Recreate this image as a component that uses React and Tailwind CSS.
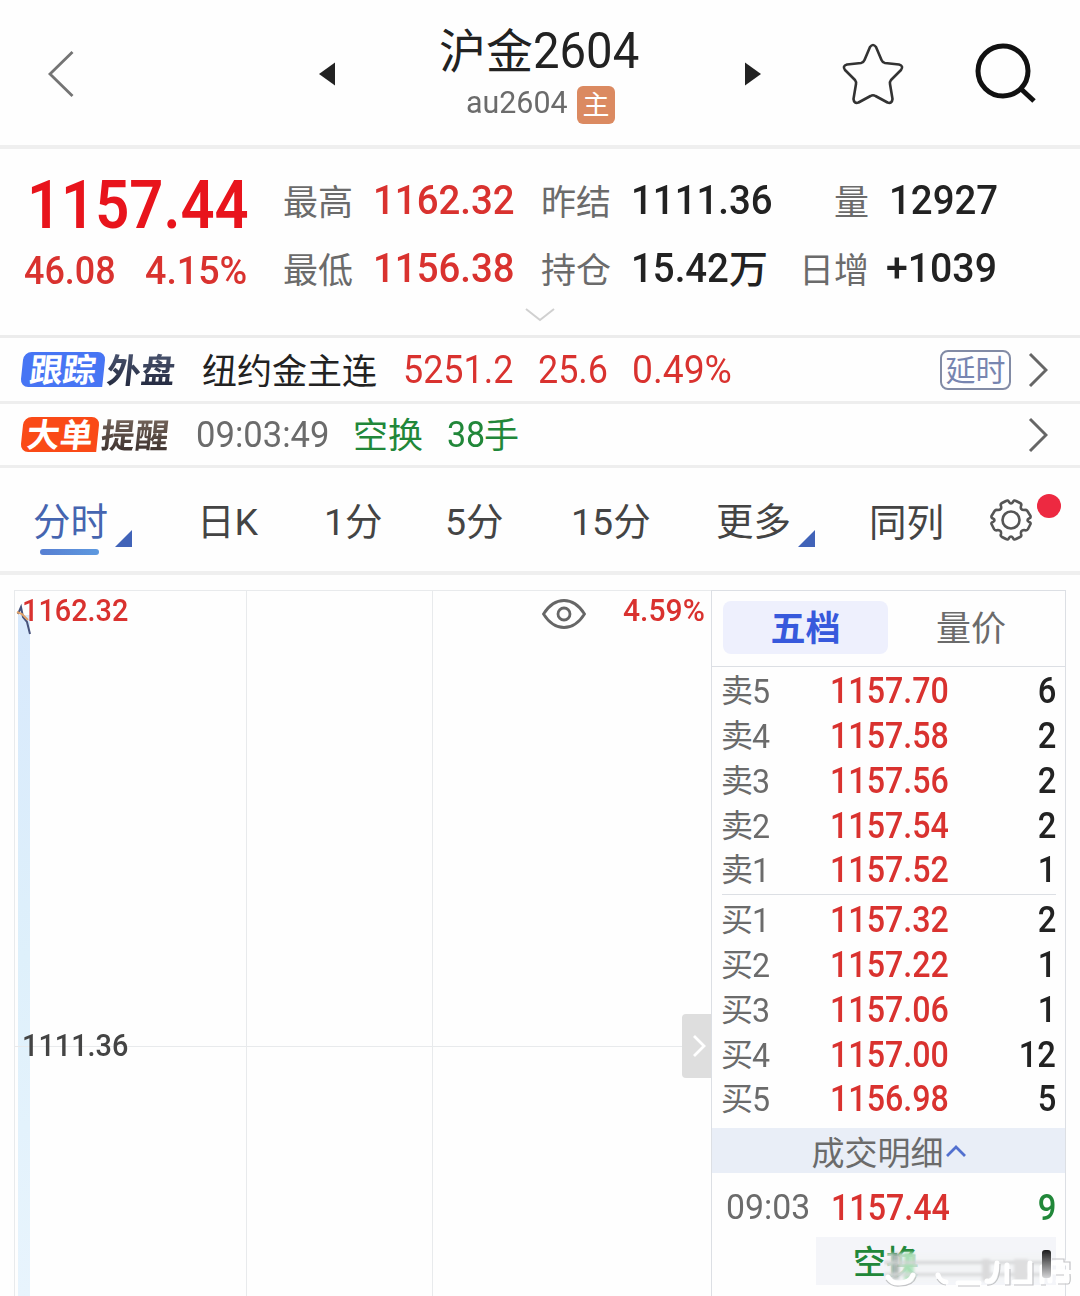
const asks = [["卖5", "1157.70", "6"], ["卖4", "1157.58", "2"], ["卖3", "1157.56", "2"], ["卖2", "1157.54", "2"], ["卖1", "1157.52", "1"]];
const bids = [["买1", "1157.32", "2"], ["买2", "1157.22", "1"], ["买3", "1157.06", "1"], ["买4", "1157.00", "12"], ["买5", "1156.98", "5"]];

function Num({ className = "", scale = "scale-x-[0.945]", children }) {
  return <span className={"block whitespace-nowrap origin-left " + scale + " " + className}>{children}</span>;
}

function Chevron() {
  return (
    <svg className="w-5 h-9 shrink-0" viewBox="0 0 20 36" fill="none" stroke="#666" strokeWidth="3">
      <path d="M2 2 18 18 2 34" />
    </svg>
  );
}

function Header() {
  return (
    <header className="h-[149px] border-b-4 border-[#efefef] flex">
      <svg className="w-7 h-12 ml-[47px] mt-[50px]" viewBox="0 0 28 48" fill="none" stroke="#747474" strokeWidth="2.8">
        <path d="M25.500 2 3 24 25.500 46" />
      </svg>
      <svg className="w-4 h-6 ml-[244px] mt-[62px]" viewBox="0 0 16 24" fill="#222"><path d="M0 12 16 0.500V23.500Z" /></svg>
      <div className="w-[410px] flex flex-col items-center">
        <div className="flex w-[202px] mt-[23px] h-14 leading-[56px] text-[#222]">
          <span className="text-[47px] w-[94px] whitespace-nowrap translate-y-px">沪金</span>
          <Num className="text-[50px]">2604</Num>
        </div>
        <div className="flex w-[150px] mt-[7px] items-center h-[38px] text-[#6b6b6b]">
          <Num className="text-[31px] leading-[32px] w-[111px] -mt-1 ml-px" scale="scale-x-[0.98]">au2604</Num>
          <span className="w-[38px] h-[38px] shrink-0 rounded-md bg-[#db8a61] text-white text-[27px] leading-[40px] text-center">主</span>
        </div>
      </div>
      <svg className="w-4 h-6 mt-[62px]" viewBox="0 0 16 24" fill="#222"><path d="M0 0.500V23.500L16 12Z" /></svg>
      <svg className="w-16 h-16 ml-[80px] mt-[42px]" viewBox="0 0 64 64" fill="none" stroke="#333" strokeWidth="2.600" strokeLinejoin="round">
        <path d="M29 5Q32 1 35 5L40.500 18Q41.500 20.500 44 21L58 22.500Q63 24 60 28L50 38Q48.500 40 49 42L51.500 57Q51 62 46.500 60.500L34.500 54Q32 52.500 29.500 54L17.500 60.500Q13 62 12.500 57L15 42Q15.500 40 14 38L4 28Q1 24 6 22.500L20 21Q22.500 20.500 23.500 18Z" />
      </svg>
      <svg className="w-16 h-16 ml-[69px] mt-[42px]" viewBox="0 0 64 64" fill="none" stroke="#111" strokeWidth="5">
        <circle cx="29" cy="29" r="25" /><path d="M46 46 60 59" />
      </svg>
    </header>
  );
}

function Stat({ label, value, labelClass, valueClass }) {
  return (
    <>
      <span className={"text-[35px] text-[#6b6b6b] whitespace-nowrap translate-y-1 " + labelClass}>{label}</span>
      <div className={"text-[41.500px] font-medium " + valueClass}>{value}</div>
    </>
  );
}

function Quote() {
  const s = "scale-x-[0.925]";
  return (
    <section className="h-[189px] border-b-[3px] border-[#ececec]">
      <div className="flex">
        <div className="w-[283px] pl-6 text-[#e8141c]">
          <div className="h-[112px] pt-[25px] pl-[3px]"><Num className="text-[66px] font-semibold leading-[64px]" scale="scale-x-[0.905]">1157.44</Num></div>
          <div className="flex -mt-[12px] h-11 leading-[44px] text-[38px] font-medium text-[#d9322f]">
            <Num className="w-[121px]">46.08</Num><Num className="w-[121px]" scale="scale-x-[0.99]">4.15%</Num>
          </div>
        </div>
        <div className="w-[797px] pt-[29px]">
          <div className="flex h-11 leading-[44px]">
            <Stat label="最高" value={<Num scale={s}>1162.32</Num>} labelClass="w-[90px]" valueClass="w-[168px] text-[#d9322f]" />
            <Stat label="昨结" value={<Num scale={s}>1111.36</Num>} labelClass="w-[90px]" valueClass="w-[168px] text-[#222]" />
            <Stat label="量" value={<Num scale={s}>12927</Num>} labelClass="w-[90px] pl-[35px]" valueClass="w-[139px] text-[#222]" />
          </div>
          <div className="flex mt-6 h-11 leading-[44px]">
            <Stat label="最低" value={<Num scale={s}>1156.38</Num>} labelClass="w-[90px]" valueClass="w-[168px] text-[#d9322f]" />
            <Stat label="持仓" value={<div className="flex whitespace-nowrap"><Num className="w-[98px]" scale={s}>15.42</Num><span className="text-[39px] translate-y-0.5">万</span></div>} labelClass="w-[90px]" valueClass="w-[168px] text-[#222]" />
            <Stat label="日增" value={<Num>+1039</Num>} labelClass="w-[87px]" valueClass="w-[140px] text-[#222]" />
          </div>
        </div>
      </div>
      <svg className="w-8 h-4 mx-auto mt-[14px]" viewBox="0 0 32 16" fill="none" stroke="#d0d0d0" strokeWidth="2"><path d="M2 2 16 13 30 2" /></svg>
    </section>
  );
}

function Tag({ first, second, box, text }) {
  return (
    <div className="flex items-center w-[160px] h-9 shrink-0 whitespace-nowrap text-[34px] font-bold leading-9">
      <span className={"h-[35px] rounded-l-lg rounded-tr-lg -skew-x-6 text-center text-white text-[33px] leading-[38px] " + box}>{first}</span>
      <span className={"ml-[3px] -skew-x-6 translate-y-px leading-[38px] bg-clip-text text-transparent bg-linear-to-b " + text}>{second}</span>
    </div>
  );
}

function Feeds() {
  return (
    <section>
      <div className="flex items-center h-[66px] border-b-[3px] border-[#eee] pl-[22px] leading-[44px] text-[#d9322f] text-[38px]">
        <Tag first="跟踪" second="外盘" box="w-[82px] bg-[#4775f4]" text="from-[#4b5570] to-[#20263b]" />
        <span className="text-[35px] text-[#222] w-[201px] ml-[20px] shrink-0 translate-y-[3px]">纽约金主连</span>
        <Num className="w-[135px] shrink-0">5251.2</Num>
        <Num className="w-[94px] shrink-0">25.6</Num>
        <Num scale="scale-x-[0.98]">0.49%</Num>
        <span className="ml-auto w-[71px] h-10 shrink-0 rounded-lg border-2 border-[#828ba5] text-[#7785b0] text-[30px] leading-[38px] text-center">延时</span>
        <div className="w-[69px] pl-[17px] shrink-0"><Chevron /></div>
      </div>
      <div className="flex items-center h-[64px] border-b-[3px] border-[#eee] pl-[22px] leading-[44px] text-[#218739]">
        <Tag first="大单" second="提醒" box="w-[76px] bg-[#fa4a17]" text="from-[#77675d] to-[#392e2b]" />
        <Num className="text-[37px] text-[#6b6b6b] w-[157px] ml-[14px]" scale="scale-x-[0.935]">09:03:49</Num>
        <span className="text-[35px] w-[94px] translate-y-0.5">空换</span>
        <Num className="text-[36px] w-[37px]">38</Num>
        <span className="text-[35px] translate-y-0.5">手</span>
        <div className="w-[69px] ml-auto pl-[17px] shrink-0"><Chevron /></div>
      </div>
    </section>
  );
}

function Corner() {
  return <svg className="w-[17px] h-[17px] mt-[30px] ml-[7px]" viewBox="0 0 17 17" fill="#4163b8"><path d="M17 0V17H0Z" /></svg>;
}

function Tabs() {
  return (
    <nav className="flex h-[107px] border-b-4 border-[#efefef] pt-8 pl-[33px] text-[37.500px] leading-[44px] text-[#444] whitespace-nowrap">
      <div className="w-[165px] flex text-[#4565b0]">
        <div className="w-[75px]">分时<div className="w-[59px] h-1.5 ml-[7px] mt-[5px] rounded-full bg-linear-to-r from-[#587fd2] to-[#5d99df]" /></div>
        <Corner />
      </div>
      <span className="w-[126px] -ml-px mr-px">日K</span>
      <span className="w-[121px]">1分</span>
      <span className="w-[126px]">5分</span>
      <span className="w-[145px]">15分</span>
      <div className="w-[153px] flex">更多<Corner /></div>
      <span className="w-[120px] translate-y-px">同列</span>
      <div className="flex -mt-0.5">
        <svg className="w-[44px] h-[44px]" viewBox="0 0 44 44" fill="none" stroke="#555" strokeWidth="2.600" strokeLinejoin="round">
          <circle cx="22" cy="22" r="8.500" />
          <path d="M17 3Q19 1.500 20 4Q22 7 24 4Q25 1.500 27 3L31 5Q33 6 32 8Q31 12 35 12Q38 11.500 39 14L41.500 18Q42 20 40 20.500Q37 22 40 24Q42 24.500 41.500 26L39 31Q38 33 35 32Q31.500 32 32 36Q33 38 31 39L27 41Q25 42.500 24 40Q22 37 20 40Q19 42.500 17 41L13 39Q11 38 12 36Q12.500 32 9 32Q6 33 5 31L2.500 26Q2 24.500 4 24Q7 22 4 20.500Q2 20 2.500 18L5 14Q6 11.500 9 12Q13 12 12 8Q11 6 13 5Z" />
        </svg>
        <span className="w-6 h-6 rounded-full bg-[#ed2941] ml-[4px] -mt-[4px]" />
      </div>
    </nav>
  );
}

function Chart() {
  return (
    <div className="relative w-[697px] h-full border-l border-t border-[#e8eaec] text-[31px] font-medium leading-9">
      <div className="flex h-full">
        <div className="w-[232px] border-r border-[#e8eaec] pt-[24px] pl-[3px]">
          <div className="w-3 h-full bg-linear-to-b from-[#d8e9fc] via-[#def0fb] to-[#e8f4fd]" />
        </div>
        <div className="w-[186px] border-r border-[#e8eaec]" />
      </div>
      <div className="absolute left-0 right-0 top-[455px] h-px bg-[#e8eaec]" />
      <Num className="absolute left-[7px] top-[2px] text-[#d9322f]" scale="scale-x-[0.93]">1162.32</Num>
      <svg className="absolute left-0 top-3 w-5 h-8" viewBox="0 0 20 32" fill="none" strokeWidth="2">
        <path d="M3 11 6 4 8 14 12 19 15 31" stroke="#46527c" />
        <path d="M2 9 7 11 13 17" stroke="#e1a36a" />
      </svg>
      <Num className="absolute left-[7px] top-[437px] text-[#444]" scale="scale-x-[0.93]">1111.36</Num>
      <Num className="absolute left-[608px] top-[2px] text-[#d9322f]" scale="scale-x-[0.97]">4.59%</Num>
      <svg className="absolute left-[526px] top-[7px] w-[46px] h-8" viewBox="0 0 46 32" fill="none" stroke="#666" strokeWidth="2.800">
        <path d="M2.500 16Q11 2.500 23 2.500T43.500 16Q35 29.500 23 29.500T2.500 16Z" /><circle cx="23" cy="16" r="6" />
      </svg>
      <div className="absolute left-[667px] top-[423px] w-[29px] h-[64px] bg-[#dedede] rounded-l-sm flex items-center justify-center pl-1">
        <svg className="w-3.500 h-[22px]" viewBox="0 0 14 22" fill="none" stroke="white" strokeWidth="2.800"><path d="M2 1 12 11 2 21" /></svg>
      </div>
    </div>
  );
}

function Level({ row }) {
  return (
    <div className="flex h-[44.750px] leading-[44px] items-center font-medium text-[36px] text-[#222]">
      <div className="flex w-[108px] font-normal text-[#6b6b6b] text-[34px]">
        <span className="text-[32px] w-[31px] -ml-px">{row[0][0]}</span><Num>{row[0][1]}</Num>
      </div>
      <Num className="text-[#d9322f]" scale="scale-x-[0.895]">{row[1]}</Num>
      <span className="ml-auto scale-x-[0.91] origin-right">{row[2]}</span>
    </div>
  );
}

function Smear() {
  return (
    <svg className="absolute left-[68px] top-[12px] w-[188px] h-[40px]" viewBox="0 0 188 40">
      <defs>
        <filter id="soft" x="-10%" y="-20%" width="120%" height="140%"><feGaussianBlur stdDeviation="1.6" /></filter>
        <filter id="fine"><feGaussianBlur stdDeviation="0.6" /></filter>
        <linearGradient id="dark" x1="0" y1="0" x2="0" y2="1"><stop offset="0" stopColor="#1c1c1c" /><stop offset="1" stopColor="#d5d5d7" /></linearGradient>
      </defs>
      <g filter="url(#soft)">
        <rect x="2" y="4" width="162" height="29" fill="#f3f4f5" opacity="0.75" />
        <rect x="8" y="4" width="7" height="26" fill="#8f9b94" opacity="0.7" />
        <rect x="20" y="3" width="10" height="28" fill="#a3dfb0" opacity="0.8" />
        <rect x="0" y="12" width="164" height="3" fill="#d3d4d5" />
        <rect x="0" y="24" width="164" height="3" fill="#d7d8d9" />
        <rect x="98" y="10" width="8" height="22" fill="#dadadb" />
        <rect x="130" y="10" width="14" height="22" fill="#dededf" />
      </g>
      <g filter="url(#fine)" fill="none" stroke="white" strokeWidth="5" strokeLinecap="round">
        <path d="M4 28Q8 35 16 34Q26 34 29 26M54 26Q56 33 62 33M74 34H95M103 32Q112 34 113 14M123 33V16M130 33H146V14M158 33V18M166 32V14M170 14H183M170 23H183V32H174" />
      </g>
      <g filter="url(#fine)" fill="none" stroke="#c3c4c6" strokeWidth="1.200">
        <path d="M2 31Q7 38 16 37Q29 37 32 28M53 30Q57 36 62 36M74 37H96M103 36Q116 37 116 15M121 36H126V20M130 36H149V14M157 36H162M168 10H180V13H186V21M172 26H180M174 35H184Q187 35 186 25" />
      </g>
      <rect x="158" y="1" width="9" height="28" rx="3" fill="url(#dark)" filter="url(#fine)" />
    </svg>
  );
}

function Book() {
  return (
    <aside className="w-[355px] border-x border-t border-[#dcdfe4]">
      <div className="flex h-[76px] pt-[10px] pl-[11px] border-b border-[#dcdfe4] text-[35px] leading-[57px] text-center">
        <span className="w-[165px] h-[53px] rounded-lg bg-[#eef0fd] text-[#3759dc] font-bold">五档</span>
        <span className="w-[166px] text-[#6b6b6b]">量价</span>
      </div>
      <div className="pl-[10px] pr-[9px]">
        <div className="h-[228px] pt-[2px] border-b border-[#dcdfe4]">{asks.map((r) => <Level key={r[0]} row={r} />)}</div>
        <div className="h-[233px] pt-[3px]">{bids.map((r) => <Level key={r[0]} row={r} />)}</div>
      </div>
      <div className="h-[45px] bg-[#e9eef7] flex justify-center items-center text-[33px] leading-[44px] text-[#6b6b6b]">
        <span className="translate-y-[3px]">成交明细</span>
        <svg className="w-5 h-3.500 ml-0.5" viewBox="0 0 20 14" fill="none" stroke="#5270cf" strokeWidth="2.800"><path d="M1 12 10 3 19 12" /></svg>
      </div>
      <div className="flex items-center h-[64px] pl-[14px] pr-[9px] pt-[6px] text-[36px] font-medium">
        <Num className="w-[105px] text-[35px] font-normal text-[#6b6b6b]" scale="scale-x-[0.965]">09:03</Num>
        <Num className="text-[#d9322f]" scale="scale-x-[0.895]">1157.44</Num>
        <span className="ml-auto text-[#218739] scale-x-[0.91] origin-right">9</span>
      </div>
      <div className="relative ml-[104px] w-[240px] h-[48px] bg-[#f4f5f9] text-[33px] leading-[52px] font-medium text-[#218739]">
        <span className="ml-[37px]">空换</span>
        <Smear />
      </div>
    </aside>
  );
}

export default function App() {
  return (
    <main className="w-[1080px] h-[1296px] overflow-hidden bg-[#fefefe] font-[Roboto,'Noto_Sans_CJK_SC',sans-serif]">
      <Header />
      <Quote />
      <Feeds />
      <Tabs />
      <div className="flex h-[721px] pl-[14px] pt-[15px]">
        <Chart />
        <Book />
      </div>
    </main>
  );
}
